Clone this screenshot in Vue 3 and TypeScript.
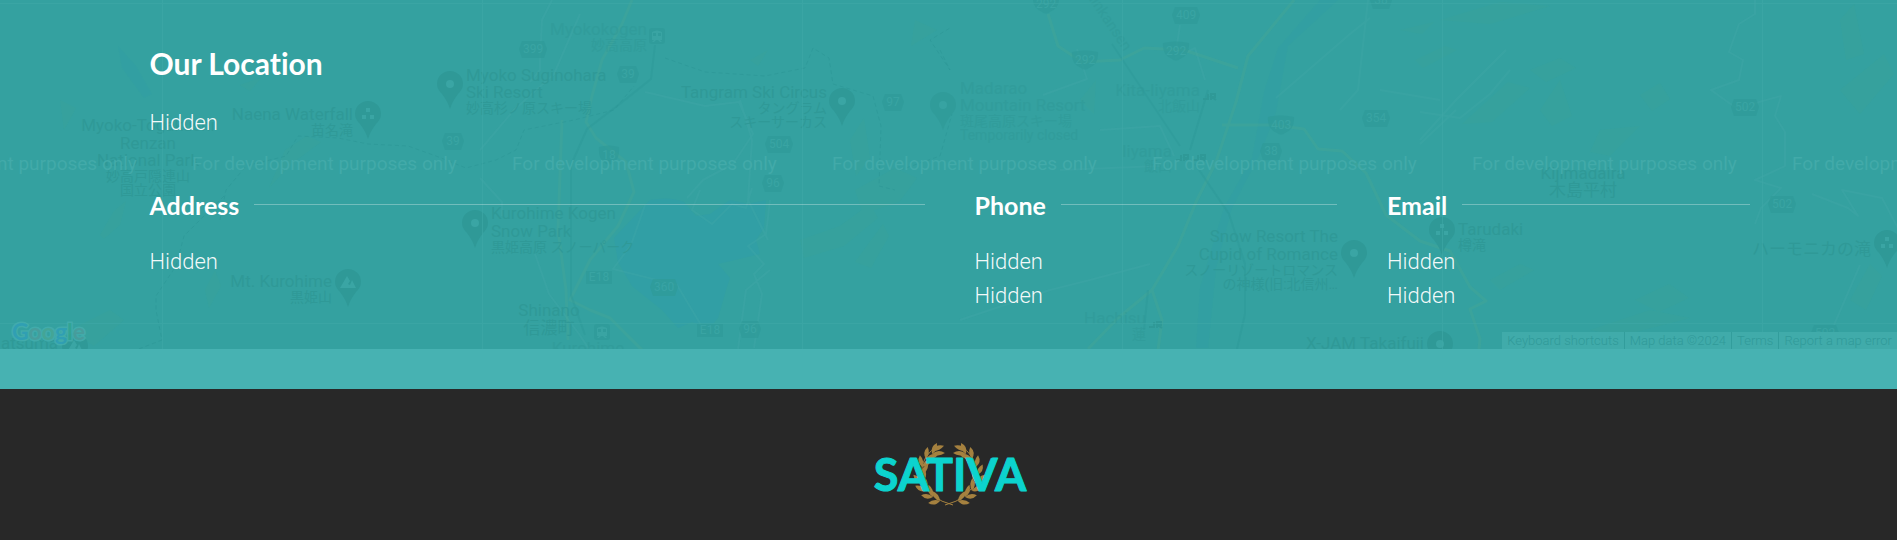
<script setup lang="ts">
interface Label { x: number; y: number; t: string; a?: 'start' | 'middle' | 'end'; s?: number; faint?: boolean }
interface Spot { x: number; y: number; kind?: string; faint?: boolean }
interface Shield { x: number; y: number; t: string; kind?: string }

const labels: Label[] = [
  { x: 148, y: 131, t: 'Myoko-Togakushi', a: 'middle' },
  { x: 148, y: 149, t: 'Renzan', a: 'middle' },
  { x: 148, y: 166, t: 'National Park', a: 'middle' },
  { x: 148, y: 181, t: '妙高戸隠連山', a: 'middle', s: 14 },
  { x: 148, y: 195, t: '国立公園', a: 'middle', s: 14 },
  { x: 353, y: 120, t: 'Naena Waterfall', a: 'end' },
  { x: 353, y: 135, t: '苗名滝', a: 'end', s: 14 },
  { x: 466, y: 81, t: 'Myoko Suginohara' },
  { x: 466, y: 98, t: 'Ski Resort' },
  { x: 466, y: 113, t: '妙高杉ノ原スキー場', s: 14 },
  { x: 647, y: 35, t: 'Myokokogen', a: 'end', faint: true },
  { x: 647, y: 50, t: '妙高高原', a: 'end', s: 14, faint: true },
  { x: 827, y: 98, t: 'Tangram Ski Circus', a: 'end' },
  { x: 827, y: 113, t: 'タングラム', a: 'end', s: 14 },
  { x: 827, y: 127, t: 'スキーサーカス', a: 'end', s: 14 },
  { x: 960, y: 94, t: 'Madarao', faint: true },
  { x: 960, y: 111, t: 'Mountain Resort', faint: true },
  { x: 960, y: 126, t: '斑尾高原スキー場', s: 14, faint: true },
  { x: 960, y: 140, t: 'Temporarily closed', s: 14, faint: true },
  { x: 491, y: 219, t: 'Kurohime Kogen' },
  { x: 491, y: 237, t: 'Snow Park' },
  { x: 491, y: 252, t: '黒姫高原 スノーパーク', s: 14 },
  { x: 332, y: 287, t: 'Mt. Kurohime', a: 'end' },
  { x: 332, y: 302, t: '黒姫山', a: 'end', s: 14 },
  { x: 549, y: 316, t: 'Shinano', a: 'middle' },
  { x: 549, y: 334, t: '信濃町', a: 'middle', s: 17 },
  { x: 588, y: 354, t: 'Kurohime', a: 'middle', faint: true },
  { x: 1200, y: 96, t: 'Kita-Iiyama', a: 'end', faint: true },
  { x: 1200, y: 111, t: '北飯山', a: 'end', s: 14, faint: true },
  { x: 1172, y: 157, t: 'Iiyama', a: 'end', faint: true },
  { x: 1172, y: 171, t: '飯山', a: 'end', s: 14, faint: true },
  { x: 1338, y: 242, t: 'Snow Resort The', a: 'end' },
  { x: 1338, y: 260, t: 'Cupid of Romance', a: 'end' },
  { x: 1338, y: 275, t: 'スノーリゾートロマンス', a: 'end', s: 14 },
  { x: 1338, y: 289, t: 'の神様(旧:北信州…', a: 'end', s: 14 },
  { x: 1146, y: 324, t: 'Hachisu', a: 'end', faint: true },
  { x: 1146, y: 339, t: '蓮', a: 'end', s: 14, faint: true },
  { x: 1424, y: 349, t: 'X-JAM Takaifuji', a: 'end' },
  { x: 1583, y: 179, t: 'Kijimadaira', a: 'middle' },
  { x: 1583, y: 196, t: '木島平村', a: 'middle', s: 17 },
  { x: 1458, y: 235, t: 'Tarudaki' },
  { x: 1458, y: 250, t: '樽滝', s: 14 },
  { x: 1871, y: 255, t: 'ハーモニカの滝', a: 'end', s: 17 },
  { x: 1, y: 349, t: 'atsuma' },
]

const pins: Spot[] = [
  { x: 368, y: 114, kind: 'dots' }, { x: 450, y: 84 }, { x: 842, y: 101 },
  { x: 943, y: 105, faint: true }, { x: 475, y: 223 }, { x: 348, y: 282, kind: 'peak' },
  { x: 1354, y: 253 }, { x: 1440, y: 344 }, { x: 1442, y: 230, kind: 'dots' },
  { x: 1887, y: 243, kind: 'dots' }, { x: 75, y: 346, kind: 'peak' },
]

const shields: Shield[] = [
  { x: 533, y: 49, t: '399' }, { x: 628, y: 74, t: '39' }, { x: 453, y: 141, t: '39' },
  { x: 609, y: 155, t: '18', kind: 'round' }, { x: 779, y: 144, t: '504' }, { x: 773, y: 183, t: '96' },
  { x: 893, y: 102, t: '97' }, { x: 664, y: 287, t: '360' }, { x: 750, y: 329, t: '96' },
  { x: 599, y: 277, t: 'E18', kind: 'box' }, { x: 710, y: 330, t: 'E18', kind: 'box' },
  { x: 1046, y: 4, t: '292', kind: 'round' }, { x: 1085, y: 60, t: '292', kind: 'round' },
  { x: 1176, y: 51, t: '292', kind: 'round' }, { x: 1186, y: 15, t: '409' },
  { x: 1281, y: 125, t: '403', kind: 'round' }, { x: 1376, y: 118, t: '354' },
  { x: 1271, y: 151, t: '38' }, { x: 1381, y: 0, t: '38' }, { x: 1745, y: 107, t: '502' },
  { x: 1782, y: 204, t: '502' }, { x: 1825, y: 333, t: '502' },
]

const stations: Spot[] = [{ x: 657, y: 36 }, { x: 602, y: 332 }]
const jr: Spot[] = [{ x: 1210, y: 101 }, { x: 1183, y: 162 }, { x: 1200, y: 162 }, { x: 1156, y: 329 }]

const tileColumns = [0, 1, 2, 3, 4, 5].map((n) => 162 + n * 320)
const watermarks = [0, 1, 2, 3, 4, 5, 6].map((n) => -128 + n * 320)

function shieldPath(s: Shield): string {
  const w = s.t.length > 2 ? 14 : 11
  if (s.kind === 'box') return `M${-w + 1} -6H${w - 1}V7H${-w + 1}Z`
  if (s.kind === 'round') return `M${-w + 1} -8Q0 -11 ${w - 1} -8Q${w} 4 4 8Q0 11 -4 8Q${-w} 4 ${-w + 1} -8Z`
  return `M${-w + 3} -8H${w - 3}L${w} 0L${w - 3} 9H${-w + 3}L${-w} 0Z`
}

const columns = [
  { title: 'Address', lines: ['Hidden'], wide: true },
  { title: 'Phone', lines: ['Hidden', 'Hidden'], wide: false },
  { title: 'Email', lines: ['Hidden', 'Hidden'], wide: false },
]

// Leaves grow in pairs along the arc of the wreath, from the bottom knot upwards.
const leaves = [18, 36, 54, 72, 90, 108, 126, 142].flatMap((deg) => {
  const rad = (deg * Math.PI) / 180
  const x = Math.round(90 - 28 * Math.sin(rad))
  const y = Math.round(44 + 27 * Math.cos(rad))
  return [
    { x, y, turn: 180 + deg - 28, len: 12 },
    { x, y, turn: 180 + deg + 34, len: 13 },
  ]
})
leaves.push({ x: 72, y: 20, turn: 338, len: 14 })
</script>

<template>
  <div class="page">
    <section class="contact">
      <svg class="map" viewBox="0 0 1897 349" preserveAspectRatio="xMinYMin slice" aria-hidden="true">
        <g class="terrain">
          <path d="M100 235l14-24 12-10-6 24-16 14zM205 290l10-20 6 16-12 22zM285 150l22-14 14 6-30 22-22 24zM240 85l22-8-12 14zM70 330l40-20 14 10-30 26zM60 100l16 8-12 22z" />
          <path d="M855 190l40-22 22 10-18 24-36 12zM850 140l14-22 6 40-14 18zM800 240l40-14 30-22 8 14-34 28-40 12zM855 262l28-38 6 12-18 32zM750 60l18-10-10 16zM1080 100l16-20-2 34zM915 20l22 10-26 16z" />
          <path d="M1440 20l60-18 50 4-60 18zM1462 124l46-42 22 6-38 34zM1540 110l20-30 12 36-20 10zM1530 70l30-12 16 10-30 14zM1640 95l20-12 10 16-18 12zM1600 130l40-4-30 30-20-4zM1635 300l34-16 20 14-30 14zM1490 280l30-16 14 6-34 20zM1840 20l14-16 10 50-18 6zM1840 90l44-36 10 20-34 40zM1590 330l60-20 40 8-70 18zM1850 300l20-36 12 12-16 34z" />
          <path d="M1415 60l30-14 12 4-34 18zM1400 30l34-8-12 12z" />
        </g>
        <g class="water">
          <path d="M650 200q20-4 34 2l12 14 14-2 20-14 18 4 18-4-2 28-8 12 4 14-42 10 12 14-4 12-8 28-10 12-16-8-14 6-16-18-30-24-14-24-4-24z" />
          <path class="river" d="M118 46l18 20 16 28-8 4-22-30zM1338 0l-50 46-12 66-14 38-30 58-16 60-8 80h-12l4-60 24-80 28-50 12-66 14-44 42-48z" />
        </g>
        <g class="streets">
          <path d="M552 0l-10 20-2 40 0 10-10 12M480 150l34-40 40-36 26-60M645 92l60 14 34-4 14 32-20 30-30 16-16 18M740 100l12 40-4 60 20 40M770 270l-24 20-8 59M480 178l22 24v14M535 254l14 40 30 40 10 15M645 205l-14 40-18 24 32 8 32 8 24 40M1180 25l-4 26M1043 95l44-16-10-30M1205 80l-10-32-20 10M1100 130l60-4 14 30M1060 170l100-4M1276 98l74-64 20-16M1368 0l-10 90-18 20M1380 90l60 10M700 190l-8 20 20 14 20-20 14 4 6-20M770 200l-4 34-18 12 16 18-10 10 8 20-8 54M960 320l90-30 40-10 60-16" />
          <path d="M1420 112l40 6 30-24 20-24M1420 144l36-34M1755 0l0 14-16 10-10 28 14 8-4 20-28 10 28 20 20-8 22-6-6 20 10 16 0 34-30 14 26 8-20 20-6 16M1812 194l36 14 10 8-16-26 40 8 18 34 12 20M1860 265l-26 60M1420 140l36-40 50-50" />
        </g>
        <g class="highways">
          <path d="M632 0l-10 24-20 36-10 36-6 26 10 16 30 24 8 30-16 34-28 34-20 40 20 10 20 8 40 40" />
          <path d="M1048 14l10 32 24 16 38-2 24-12 40 2 54 18M1294 0l-46 56-12 46-20 60-20 40-18 44-26 44-34 28-30 31M1222 125h52l30 4 14 20 24 2 24 22 20 42 34 26 30 10 20 36 16 14-16 8 10 30-2 20M1152 290l10 30-4 30" />
          <path d="M568 340l-2-50-8-60 4-110" />
        </g>
        <g class="rail">
          <path d="M655 45l-4 34-30 24-34 26-16 36 0 60 0 70 14 40M1112 44l68 102M1195 164l34 50 16 50 0 50-8 35M1208 90l-18 60M1148 290l-4 40" />
        </g>
        <g class="border">
          <path d="M665 58l40 14 60 4 40-8 8-20 16 10 4 26 40 12 8 30-2 60 16 4M220 220l6-30 20-24 40-10 12-20 40 2 30 6 40 2 28 10 30 12 30-8 20-10 8-20 50-10 40-10 20-24M224 196l-40 40-8 30-20 30 0 14 6 30-36 14M900 170l40-14 12-42M940 50l10 20-20-30 20-12" />
        </g>
        <g class="labels">
          <text v-for="l in labels" :key="l.t + l.x" :x="l.x" :y="l.y" :text-anchor="l.a ?? 'start'" :font-size="l.s ?? 17" :class="{ faint: l.faint }">{{ l.t }}</text>
          <text class="faint" transform="translate(1081 -12) rotate(56)" font-size="15">Shinkansen</text>
        </g>
        <g v-for="p in pins" :key="'p' + p.x" :transform="`translate(${p.x} ${p.y})`" class="pin" :class="{ dim: p.faint }">
          <path d="M0 25Q-2 18-8 10Q-13 5-13 0A13 13 0 0 1 13 0Q13 5 8 10Q2 18 0 25Z" />
          <path v-if="p.kind === 'dots'" class="hole" d="M-2-6h4v4h-4zM-6 1h4v4h-4zM2 1h4v4h-4z" />
          <path v-else-if="p.kind === 'peak'" class="hole" d="M-8 6L-1-6L2-1L0 2L2 3L4-2L8 6Z" />
          <circle v-else class="hole" r="4" />
        </g>
        <g v-for="s in shields" :key="s.t + s.x" :transform="`translate(${s.x} ${s.y})`" class="shield">
          <path :d="shieldPath(s)" />
          <text text-anchor="middle" y="4" font-size="12">{{ s.t }}</text>
        </g>
        <g v-for="s in stations" :key="'s' + s.x" :transform="`translate(${s.x} ${s.y})`" class="shield">
          <rect x="-8" y="-8" width="16" height="16" rx="3" />
          <path class="glyph" d="M-5-4Q0-7 5-4V4H3L5 6H3L1 4H-1L-3 6H-5L-3 4H-5ZM-4-3V0H-1V-3ZM1-3V0H4V-3Z" />
        </g>
        <g v-for="s in jr" :key="'j' + s.x" class="jr" :transform="`translate(${s.x} ${s.y})`">
          <path d="M-5-1V-2H-1V-7M2-1V-7H6V-4H3L7-1" transform="translate(-1 0)" />
        </g>
        <g class="tiles">
          <path v-for="x in tileColumns" :key="x" :d="`M${x} 0h1v349h-1z`" />
          <path d="M0 3h1897v1h-1897zM0 323h1897v1h-1897z" />
        </g>
        <g class="watermark">
          <text v-for="x in watermarks" :key="x" :x="x" y="170">For development purposes only</text>
        </g>
        <g class="google">
          <text x="12" y="340"><tspan class="b">G</tspan><tspan class="r">o</tspan><tspan class="y">o</tspan><tspan class="b">g</tspan><tspan class="g">l</tspan><tspan class="r">e</tspan></text>
        </g>
      </svg>

      <div class="container">
        <h2>Our Location</h2>
        <p>Hidden</p>
        <div class="details">
          <div v-for="c in columns" :key="c.title" :class="{ wide: c.wide }">
            <h3>{{ c.title }}</h3>
            <p v-for="(line, i) in c.lines" :key="i">{{ line }}</p>
          </div>
        </div>
      </div>

      <div class="attribution">
        <button type="button">Keyboard shortcuts</button>
        <span>Map data ©2024</span>
        <a href="#terms">Terms</a>
        <a href="#report">Report a map error</a>
      </div>
    </section>
    <div class="strip"></div>
    <footer>
      <a href="#home" aria-label="Sativa home">
        <svg class="logo" viewBox="0 0 180 90">
          <g class="laurel">
            <g v-for="side in [1, -1]" :key="side" :transform="side === 1 ? '' : 'translate(180 0) scale(-1 1)'">
              <path class="stem" d="M94 74Q70 68 63 49Q60 31 72 20" />
              <path v-for="(l, i) in leaves" :key="i" :transform="`translate(${l.x} ${l.y}) rotate(${l.turn})`" :d="`M0 0Q${l.len / 2} -5 ${l.len} 0Q${l.len / 2} 4 0 0Z`" />
            </g>
          </g>
          <text x="91" y="60" text-anchor="middle">SATIVA</text>
        </svg>
      </a>
    </footer>
  </div>
</template>

<style>
body { margin: 0; background: #282828; }
</style>

<style scoped>
.page { font-family: Roboto, "Noto Sans CJK JP", sans-serif; color: #fff; }
.contact { position: relative; overflow: hidden; background: #34a1a0; }
.map { position: absolute; top: 0; left: 0; width: 100%; height: 100%; font-family: Roboto, "Noto Sans CJK JP", sans-serif; }
.terrain { fill: #3fa592; opacity: 0.2; }
.water { fill: #309eaa; opacity: 0.5; }
.river { opacity: 0.4; }
.streets path, .highways path, .rail path, .border path, .jr path { fill: none; }
.streets { stroke: #47abaa; stroke-width: 2; stroke-linejoin: round; opacity: 0.25; }
.highways { stroke: #4ba893; stroke-width: 3; stroke-linejoin: round; opacity: 0.3; }
.rail { stroke: #2c9595; stroke-width: 2; opacity: 0.35; }
.border { stroke: #2a9393; stroke-width: 1; stroke-dasharray: 4 3; opacity: 0.5; }
.labels { fill: #2f9997; }
.labels .faint { opacity: 0.5; }
.pin { fill: #2f9997; }
.dim { opacity: 0.6; }
.pin .hole { fill: #3aa5a4; }
.shield { fill: #2f9b99; opacity: 0.7; }
.shield text, .shield .glyph { fill: #3ca6a5; }
.shield .glyph { fill-rule: evenodd; }
.jr path { stroke: #2f9997; stroke-width: 2; }
.tiles { fill: #3fa8a7; opacity: 0.6; }
.watermark { fill: #42aaa9; font-family: Roboto, sans-serif; font-size: 19px; }
.google { font-family: Lato, sans-serif; font-size: 23px; font-weight: 700; opacity: 0.8; }
.google text { stroke: #45aeae; stroke-width: 3; paint-order: stroke; }
.b { fill: #309fb8; }
.r { fill: #4c9d9c; }
.y { fill: #48a794; }
.g { fill: #32a592; }

.container { position: relative; box-sizing: border-box; max-width: 1602px; margin: 0 auto; padding: 43px 0 36px 2px; }
h2, h3 { margin: 0; font-family: Lato, sans-serif; font-weight: 700; font-variant-ligatures: none; }
h2 { font-size: 30px; line-height: 40px; margin-bottom: 23px; }
h3 { display: flex; align-items: center; gap: 15px; font-size: 25px; line-height: 34px; margin-bottom: 23px; }
h3::after { content: ""; flex: 1; height: 1px; margin-bottom: 2px; background: rgba(255, 255, 255, 0.3); }
p { margin: 0; font-size: 22px; font-weight: 300; line-height: 34px; color: rgba(255, 255, 255, 0.95); }
.details { display: grid; grid-template-columns: repeat(4, 1fr); column-gap: 50px; margin-top: 48px; }
.wide { grid-column: span 2; }

.attribution { position: absolute; right: 0; bottom: 0; display: flex; height: 17px; background: #40abaa; }
.attribution > * { box-sizing: border-box; padding: 0 5px; border: 0; border-left: 1px solid #329d9c; background: none; color: #309a99; font-family: Roboto, sans-serif; font-size: 13px; font-weight: 300; line-height: 17px; text-decoration: none; }
.attribution > :first-child { border-left: 0; }
.strip { height: 40px; background: #47b2b2; }
footer { display: flex; justify-content: center; padding: 42px 0 19px; background: #282828; }
footer a { display: block; }
.logo { display: block; width: 180px; height: 90px; }
.laurel { fill: #a5813f; }
.stem { fill: none; stroke: #a5813f; stroke-width: 1; }
.logo text { font-family: Lato, sans-serif; font-size: 45px; font-weight: 700; fill: #0cd3ce; stroke: #0cd3ce; stroke-width: 1; stroke-linejoin: round; }
</style>
